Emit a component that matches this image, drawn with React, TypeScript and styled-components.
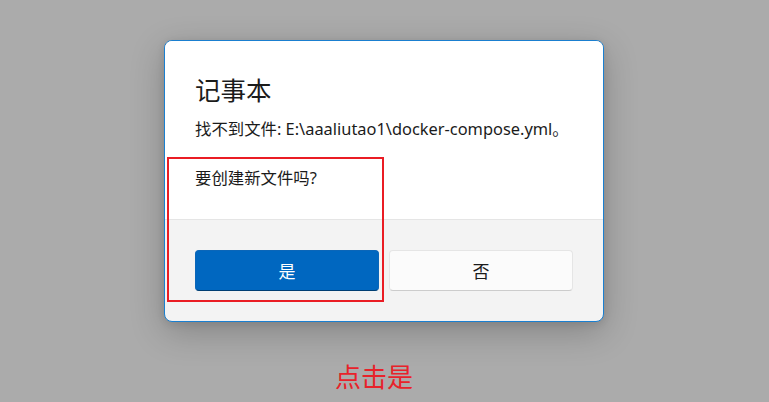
import React from "react";
import styled, { createGlobalStyle } from "styled-components";

const Global = createGlobalStyle`
  html, body { margin: 0; padding: 0; }
  body {
    background: #ababab;
    font-family: "Noto Sans", "Noto Sans CJK SC", sans-serif;
    color: #1b1b1b;
  }
`;

const Page = styled.div`
  width: 769px;
  height: 402px;
  display: flex;
  flex-direction: column;
  align-items: center;
  padding: 40px 1px 0 0;
  box-sizing: border-box;
  overflow: hidden;
`;

const Dialog = styled.div`
  position: relative;
  width: 440px;
  height: 282px;
  box-sizing: border-box;
  border: 1px solid #1a7fd0;
  border-radius: 8px;
  background: #f3f3f3;
  box-shadow: 0 10px 34px rgba(0, 0, 0, 0.22), 0 2px 8px rgba(0, 0, 0, 0.1);
  display: flex;
  flex-direction: column;
  overflow: hidden;
`;

const Content = styled.div`
  background: #ffffff;
  height: 179px;
  box-sizing: border-box;
  padding: 31px 30px 0 30px;
  border-bottom: 1px solid #e5e5e5;
`;

const Title = styled.h1`
  margin: 0;
  font-family: "Noto Sans CJK SC", sans-serif;
  font-weight: 400;
  font-size: 25.5px;
  line-height: 34px;
  color: #1b1b1b;
`;

const Text = styled.p<{ $top: number }>`
  margin: ${(p) => p.$top}px 0 0 0;
  font-family: "Noto Sans", "Noto Sans CJK SC", sans-serif;
  font-size: 16.4px;
  line-height: 22px;
  color: #1b1b1b;
  white-space: nowrap;
`;

const Footer = styled.div`
  flex: 1;
  display: flex;
  gap: 10px;
  padding: 30px 30px 0 30px;
`;

const Button = styled.button<{ $primary?: boolean }>`
  width: 184px;
  height: 41px;
  box-sizing: border-box;
  border-radius: 4px;
  font-family: "Noto Sans CJK SC", sans-serif;
  font-size: 17px;
  cursor: pointer;
  ${(p) =>
    p.$primary
      ? `
    background: #0067c0;
    color: #ffffff;
    border: 1px solid #0b66b8;
    border-bottom-color: #003e73;
  `
      : `
    background: #fbfbfb;
    color: #1b1b1b;
    border: 1px solid #e5e5e5;
    border-bottom-color: #cccccc;
  `}
`;

const Highlight = styled.div`
  position: absolute;
  left: 2px;
  top: 116px;
  width: 217px;
  height: 145px;
  border: 2px solid #ea1c24;
  box-sizing: border-box;
  pointer-events: none;
`;

const Caption = styled.div`
  margin: 37px 20px 0 0;
  font-family: "Noto Sans CJK SC", sans-serif;
  font-size: 26px;
  line-height: 34px;
  color: #e8222a;
`;

export default function App() {
  return (
    <>
      <Global />
      <Page>
        <Dialog>
          <Content>
            <Title>记事本</Title>
            <Text $top={12}>找不到文件: E:\aaaliutao1\docker-compose.yml。</Text>
            <Text $top={27}>要创建新文件吗?</Text>
          </Content>
          <Footer>
            <Button $primary>是</Button>
            <Button>否</Button>
          </Footer>
          <Highlight />
        </Dialog>
        <Caption>点击是</Caption>
      </Page>
    </>
  );
}
